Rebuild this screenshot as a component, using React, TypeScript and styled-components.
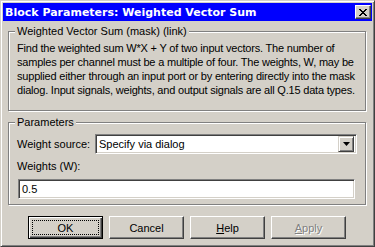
import React from "react";
import styled, { createGlobalStyle } from "styled-components";

const Global = createGlobalStyle`
  html, body {
    margin: 0;
    padding: 0;
    background: #d4d0c8;
  }
  body {
    font-family: "Liberation Sans", Arial, sans-serif;
    font-size: 11px;
    color: #000;
  }
`;

const Window = styled.div`
  box-sizing: border-box;
  width: 375px;
  height: 247px;
  background: #d4d0c8;
  border: 1px solid;
  border-color: #d4d0c8 #404040 #404040 #d4d0c8;
  box-shadow: inset 1px 1px #fff, inset -1px -1px #808080;
  padding: 2px;
  display: flex;
  flex-direction: column;
`;

const TitleBar = styled.div`
  height: 18px;
  flex: none;
  background: #0000ff;
  display: flex;
  align-items: center;
  justify-content: space-between;
  padding: 0 1px 0 2px;
`;

const Title = styled.span`
  color: #fff;
  font: bold 11px "DejaVu Sans", sans-serif;
  white-space: nowrap;
`;

const CloseButton = styled.div`
  box-sizing: border-box;
  width: 16px;
  height: 14px;
  background: #d4d0c8;
  border: 1px solid;
  border-color: #fff #404040 #404040 #fff;
  box-shadow: inset -1px -1px #808080;
  display: flex;
  align-items: center;
  justify-content: center;
`;

const Body = styled.div`
  flex: 1;
  display: flex;
  flex-direction: column;
  padding: 4px 6px 0 5px;
`;

const Group = styled.fieldset<{ $gap?: number }>`
  margin: ${(p) => p.$gap ?? 0}px 0 0 0;
  padding: 0 8px;
  border: 1px solid #808080;
  box-shadow: inset 1px 1px #fff, 1px 1px #fff;
  min-width: 0;
`;

const Legend = styled.legend`
  padding: 0 2px;
  margin-left: -2px;
  line-height: 13px;
  background: #d4d0c8;
`;

const Description = styled.p`
  margin: 3px 0 13px;
  line-height: 14px;
  white-space: nowrap;
  letter-spacing: -0.2px;
`;

const Row = styled.div<{ $top: number }>`
  display: flex;
  align-items: center;
  margin-top: ${(p) => p.$top}px;
  line-height: 13px;
`;

const FieldLabel = styled.span`
  width: 78px;
  flex: none;
`;

const Sunken = styled.div`
  box-sizing: border-box;
  height: 20px;
  background: #fff;
  border: 1px solid;
  border-color: #808080 #fff #fff #808080;
  box-shadow: inset 1px 1px #404040, inset -1px -1px #d4d0c8;
  display: flex;
  align-items: center;
`;

const Select = styled(Sunken)`
  flex: 1;
  padding: 2px 2px 2px 3px;
  justify-content: space-between;
`;

const Input = styled(Sunken)<{ $indent: number }>`
  margin: 6px 2px 5px ${(p) => p.$indent}px;
  padding-left: 3px;
`;

const DropButton = styled.div`
  box-sizing: border-box;
  width: 16px;
  height: 16px;
  background: #d4d0c8;
  border: 1px solid;
  border-color: #d4d0c8 #404040 #404040 #d4d0c8;
  box-shadow: inset 1px 1px #fff, inset -1px -1px #808080;
  display: flex;
  align-items: center;
  justify-content: center;
`;

const ButtonRow = styled.div`
  display: flex;
  justify-content: center;
  gap: 6px;
  margin-top: 11px;
`;

const Button = styled.div<{ $default?: boolean; $disabled?: boolean }>`
  box-sizing: border-box;
  width: 75px;
  height: 23px;
  display: flex;
  align-items: center;
  justify-content: center;
  background: #d4d0c8;
  border: 1px solid;
  border-color: ${(p) => (p.$default ? "#000" : "#fff #404040 #404040 #fff")};
  box-shadow: ${(p) =>
    p.$default
      ? "inset 1px 1px #fff, inset -1px -1px #404040, inset -2px -2px #808080"
      : "inset -1px -1px #808080"};
  color: ${(p) => (p.$disabled ? "#808080" : "#000")};
  text-shadow: ${(p) => (p.$disabled ? "1px 1px #fff" : "none")};
  position: relative;
`;

const FocusRing = styled.span`
  position: absolute;
  inset: 3px;
  border: 1px dotted #000;
`;

const CloseIcon = () => (
  <svg width="8" height="7" viewBox="0 0 8 7">
    <path d="M0 0L7 7M1 0L8 7M7 0L0 7M8 0L1 7" stroke="#000" strokeWidth="1" shapeRendering="crispEdges" />
  </svg>
);

const ArrowIcon = () => (
  <svg width="7" height="4" viewBox="0 0 7 4">
    <path d="M0 0H7L3.5 4Z" fill="#000" />
  </svg>
);

export default function App() {
  return (
    <>
      <Global />
      <Window>
        <TitleBar>
          <Title>Block Parameters: Weighted Vector Sum</Title>
          <CloseButton>
            <CloseIcon />
          </CloseButton>
        </TitleBar>
        <Body>
          <Group>
            <Legend>Weighted Vector Sum (mask) (link)</Legend>
            <Description>
              Find the weighted sum W*X + Y of two input vectors. The number of
              <br />
              samples per channel must be a multiple of four. The weights, W, may be
              <br />
              supplied either through an input port or by entering directly into the mask
              <br />
              dialog. Input signals, weights, and output signals are all Q.15 data types.
            </Description>
          </Group>
          <Group $gap={5}>
            <Legend>Parameters</Legend>
            <Row $top={5}>
              <FieldLabel>Weight source:</FieldLabel>
              <Select>
                <span>Specify via dialog</span>
                <DropButton>
                  <ArrowIcon />
                </DropButton>
              </Select>
            </Row>
            <Row $top={6}>Weights (W):</Row>
            <Input $indent={1}>0.5</Input>
          </Group>
          <ButtonRow>
            <Button $default>
              <FocusRing />
              OK
            </Button>
            <Button>Cancel</Button>
            <Button>
              <span>
                <u>H</u>elp
              </span>
            </Button>
            <Button $disabled>
              <span>
                <u>A</u>pply
              </span>
            </Button>
          </ButtonRow>
        </Body>
      </Window>
    </>
  );
}
